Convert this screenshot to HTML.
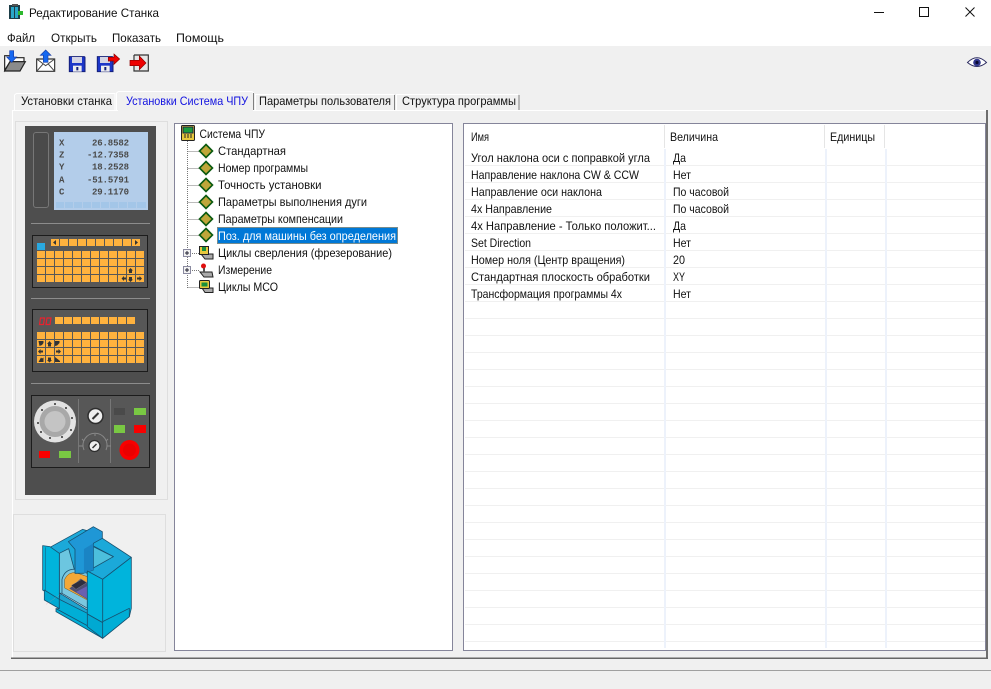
<!DOCTYPE html>
<html lang="ru"><head><meta charset="utf-8"><title>Редактирование Станка</title>
<style>
html,body{margin:0;padding:0;background:#f0f0f0;width:991px;height:689px;overflow:hidden}
svg{display:block}
text{font-family:"Liberation Sans","Noto Sans CJK SC",sans-serif;font-size:12px;fill:#111}
text.n{font:bold 9px "Liberation Mono",monospace;fill:#4a4a4a}
.l{stroke:#777;stroke-width:1;stroke-dasharray:1 1;fill:none}
.m{stroke:#17506f;stroke-width:2.400;stroke-linejoin:round}
.g{stroke:#575757;stroke-width:1;fill:none}
</style></head><body>
<svg xmlns="http://www.w3.org/2000/svg" width="991" height="689" viewBox="0 0 991 689">
<defs>
<g id="d"><path d="M0-6.500 6.500 0 0 6.500-6.500 0Z" fill="#bfa63a" stroke="#0b5a10" stroke-width="1.600"/></g>
</defs>

<rect width="991" height="46" fill="#fff"/>
<rect y="46" width="991" height="643" fill="#f0f0f0"/>

<!-- title bar -->
<rect x="9" y="5" width="11" height="14" fill="#1d3d47"/><rect x="12" y="4" width="6" height="2" fill="#555"/>
<rect x="11" y="7" width="3" height="11" fill="#2aa7c9"/><rect x="15" y="7" width="3" height="11" fill="#2aa7c9"/><rect x="18" y="11" width="5" height="4" fill="#2eb82e"/>
<text x="29" y="17" textLength="130" lengthAdjust="spacingAndGlyphs">Редактирование Станка</text>
<rect x="874" y="12" width="10" height="1" fill="#111"/>
<rect x="919.500" y="7.500" width="9" height="9" fill="none" stroke="#111"/>
<path d="M965.500 7.500 974.500 16.500M974.500 7.500 965.500 16.500" stroke="#111" fill="none"/>

<!-- menu -->
<text x="7" y="42" textLength="28" lengthAdjust="spacingAndGlyphs">Файл</text>
<text x="51" y="42" textLength="46" lengthAdjust="spacingAndGlyphs">Открыть</text>
<text x="112" y="42" textLength="49" lengthAdjust="spacingAndGlyphs">Показать</text>
<text x="176" y="42" textLength="48" lengthAdjust="spacingAndGlyphs">Помощь</text>

<!-- toolbar -->
<g transform="translate(0,45) scale(.3333)">
 <path d="M14 32H34L40 38H72V50H30L14 76Z" fill="#fff" stroke="#222" stroke-width="3.500"/>
 <path d="M14 78 30 50H76L60 78Z" fill="#8b8b8b" stroke="#222" stroke-width="3.500"/>
 <path d="M29 17H41V36H50L35 52 20 36H29Z" fill="#1668f0" stroke="#1a3fa8" stroke-width="2"/>
 <path d="M110 42H164V79H110Z" fill="#fff" stroke="#333" stroke-width="3.500"/>
 <path d="M110 42 137 62 164 42M110 79 130 56M164 79 144 56" fill="none" stroke="#444" stroke-width="3"/>
 <path d="M130 52V31H121L137 15 153 31H144V52Z" fill="#1668f0" stroke="#1a3fa8" stroke-width="2"/>
 <path d="M208 35H252Q255 35 255 38V80H208Z" fill="#1c36c8" stroke="#141f78" stroke-width="3"/>
 <rect x="216" y="36" width="30" height="18" fill="#d4d4e4"/><rect x="219" y="62" width="26" height="18" fill="#eee"/><rect x="229" y="66" width="6" height="10" fill="#141f78"/>
 <path d="M292 35H336Q339 35 339 38V80H292Z" fill="#1c36c8" stroke="#141f78" stroke-width="3"/>
 <rect x="300" y="36" width="30" height="18" fill="#d4d4e4"/><rect x="303" y="62" width="26" height="18" fill="#eee"/><rect x="313" y="66" width="6" height="10" fill="#141f78"/>
 <path d="M325 37H342V27L359 42 342 58V48H325Z" fill="#ee0000" stroke="#8a0000" stroke-width="2"/>
 <path d="M402 30H445V78H402V62M402 46V30" fill="#e6e6e6" stroke="#333" stroke-width="3.500"/>
 <path d="M390 46H418V33L438 54 418 74V62H390Z" fill="#ee0000" stroke="#8a0000" stroke-width="2"/>
</g>
<!-- eye -->
<g transform="translate(977,62.500)">
 <path d="M-9.500 0Q0-9.500 9.500 0Q0 8-9.500 0Z" fill="#fff" stroke="#2c2c60" stroke-width="1"/>
 <circle r="3.800" fill="#33398f"/><circle r="1.600" fill="#0a0a30"/>
</g>

<!-- tab page frame -->
<path d="M12.500 658V110.500H986" fill="none" stroke="#fff"/>
<rect x="986" y="110" width="2" height="549" fill="#6e6e6e"/>
<rect x="11" y="657.500" width="977" height="1.500" fill="#666"/>
<rect y="670" width="991" height="1" fill="#a0a0a0"/>

<!-- tabs -->
<path d="M14.500 110V95L16.500 93.500H115V110" fill="#f0f0f0" stroke="#fff"/>
<path d="M116.500 110V93L118.500 91.500H252L253.500 93V110" fill="#f0f0f0" stroke="#fff"/>
<rect x="253" y="93" width="1" height="17" fill="#808080"/>
<rect x="118" y="110" width="135" height="1" fill="#f0f0f0"/>
<path d="M255.500 110V94.500H394" fill="none" stroke="#fff"/><rect x="394" y="95" width="1" height="15" fill="#808080"/>
<path d="M396.500 110V94.500H518" fill="none" stroke="#fff"/><rect x="518.500" y="95" width="1" height="15" fill="#808080"/>
<text x="21" y="105" textLength="91" lengthAdjust="spacingAndGlyphs">Установки станка</text>
<text x="126" y="105" textLength="122" lengthAdjust="spacingAndGlyphs" style="fill:#1212e0">Установки Система ЧПУ</text>
<text x="259" y="105" textLength="132" lengthAdjust="spacingAndGlyphs">Параметры пользователя</text>
<text x="402" y="105" textLength="114" lengthAdjust="spacingAndGlyphs">Структура программы</text>

<!-- left control panel -->
<rect x="15.500" y="121.500" width="152" height="378" fill="#f0f0f0" stroke="#dedede"/>
<rect x="25" y="126" width="131" height="369" fill="#4e4e4e"/>
<rect x="33.500" y="132.500" width="15" height="75" rx="2.500" fill="#4a4a4a" stroke="#777"/>
<rect x="54" y="132" width="94" height="78" fill="#b3cdea"/>
<rect x="56" y="202" width="90" height="6" fill="#a3c6e8"/>
<path d="M64.500 202v6M73.500 202v6M82.500 202v6M91.500 202v6M100.500 202v6M109.500 202v6M118.500 202v6M127.500 202v6M136.500 202v6" stroke="#b3cdea" fill="none"/>
<text class="n" x="59" y="145.500">X</text>
<text class="n" x="59" y="157.500">Z</text>
<text class="n" x="59" y="169.500">Y</text>
<text class="n" x="59" y="182.500">A</text>
<text class="n" x="59" y="194.500">C</text>
<text class="n" x="92" y="145.500" textLength="37">26.8582</text>
<text class="n" x="87" y="157.500" textLength="42">-12.7358</text>
<text class="n" x="92" y="169.500" textLength="37">18.2528</text>
<text class="n" x="87" y="182.500" textLength="42">-51.5791</text>
<text class="n" x="92" y="194.500" textLength="37">29.1170</text>

<rect x="31" y="223" width="119" height="1" fill="#8c8c8c"/>
<rect x="32.500" y="235.500" width="115" height="52" fill="#575757" stroke="#1c1c1c"/>
<rect x="51" y="239" width="89" height="7" fill="#ffb23e"/>
<path class="g" d="M59.500 239v7M68.500 239v7M77.500 239v7M86.500 239v7M95.500 239v7M104.500 239v7M113.500 239v7M122.500 239v7M131.500 239v7"/>
<rect x="37" y="243" width="8" height="7" fill="#29a9e1"/>
<rect x="37" y="251" width="107" height="31" fill="#ffb23e"/>
<path class="g" d="M45.500 251v31M54.500 251v31M63.500 251v31M72.500 251v31M81.500 251v31M90.500 251v31M99.500 251v31M108.500 251v31M117.500 251v31M126.500 251v31M135.500 251v31M37 258.500h107M37 266.500h107M37 274.500h107"/>
<g fill="#333">
 <path d="M53 242.500 56 240V245ZM135 240 138 242.500 135 245Z"/>
 <path d="M130.500 268 133 270.500H132V273H129V270.500H128ZM130.500 282 128 279.500H129V277H132V279.500H133ZM121.500 278.500 124 276V277.500H126V279.500H124V281ZM142 278.500 139.500 276V277.500H137V279.500H139.500V281Z"/>
</g>
<rect x="31" y="298" width="119" height="1" fill="#8c8c8c"/>
<rect x="32.500" y="309.500" width="115" height="62" fill="#575757" stroke="#1c1c1c"/>
<path d="M40.500 318H44.500L43.500 324.500H39.500ZM47 318H51L50 324.500H46Z" fill="none" stroke="#e8222e" stroke-width="1.200"/>
<rect x="55" y="317" width="80" height="7" fill="#ffb23e"/>
<path class="g" d="M63.500 317v7M72.500 317v7M81.500 317v7M90.500 317v7M99.500 317v7M108.500 317v7M117.500 317v7M126.500 317v7"/>
<rect x="37" y="332" width="107" height="31" fill="#ffb23e"/>
<path class="g" d="M45.500 332v31M54.500 332v31M63.500 332v31M72.500 332v31M81.500 332v31M90.500 332v31M99.500 332v31M108.500 332v31M117.500 332v31M126.500 332v31M135.500 332v31M37 339.500h107M37 347.500h107M37 355.500h107"/>
<g fill="#333">
 <path d="M38.500 341H43.500V343L42 345 39.500 346ZM49.500 341 52 344H51V346.500H48V344H47ZM59.500 341H55V346L57 345.500 59.500 343Z"/>
 <path d="M38 351.500 40.500 349V350.500H43V352.500H40.500V354ZM61 351.500 58.500 349V350.500H56V352.500H58.500V354Z"/>
 <path d="M38.500 362H43.500L43.500 357.500 42 358.500 41 357.500ZM49.500 362.500 47 360H48V357.500H51V360H52ZM60 362H55V357L60 361Z"/>
</g>
<rect x="31" y="383" width="119" height="1" fill="#8c8c8c"/>
<rect x="31.500" y="395.500" width="118" height="72" fill="#575757" stroke="#1c1c1c"/>
<rect x="78" y="399" width="1" height="64" fill="#777"/><rect x="110" y="399" width="1" height="64" fill="#777"/>
<circle cx="55" cy="421.500" r="21" fill="#e2e2e2"/><circle cx="55" cy="421.500" r="15.500" fill="#a8a8a8"/><circle cx="55" cy="421.500" r="10.500" fill="#c4c4c4"/>
<g fill="#333"><circle cx="55" cy="404" r="1"/><circle cx="66" cy="408" r="1"/><circle cx="72" cy="418" r="1"/><circle cx="71" cy="430" r="1"/><circle cx="62" cy="437" r="1"/><circle cx="50" cy="438" r="1"/><circle cx="41" cy="432" r="1"/><circle cx="38" cy="423" r="1"/><circle cx="42" cy="410" r="1"/></g>
<circle cx="95.500" cy="416" r="7.500" fill="#eee" stroke="#2e2e2e" stroke-width="1.500"/><path d="M92.500 419 98.500 413" stroke="#333" stroke-width="2"/>
<path d="M84 450A12 12 0 1 1 106 450" fill="none" stroke="#888"/>
<path d="M95 436V434M84 441 82 439M106 441 108 439M79 446H83M107 446H111" stroke="#888"/>
<circle cx="94.500" cy="446" r="5.500" fill="#eee" stroke="#2e2e2e" stroke-width="1.200"/><path d="M92.500 448 96.500 444" stroke="#333" stroke-width="1.500"/>
<rect x="114" y="408" width="11" height="7" fill="#4a4a4a"/>
<rect x="134" y="408" width="12" height="7" fill="#79c843"/>
<rect x="114" y="425" width="11" height="8" fill="#79c843"/>
<rect x="134" y="425" width="12" height="8" fill="#f80000"/>
<circle cx="129.500" cy="450" r="10" fill="#f80000"/><circle cx="129.500" cy="450" r="6.500" fill="#ea0000"/>
<rect x="39" y="451" width="11" height="7" fill="#f80000"/>
<rect x="59" y="451" width="12" height="7" fill="#79c843"/>

<!-- machine frame -->
<rect x="13.500" y="514.500" width="152" height="137" fill="#f0f0f0" stroke="#dedede"/>
<g transform="translate(10,510) scale(.3333)">
 <!-- back frame -->
 <path class="m" d="M120 112 218 58 260 70V120L232 190H165L150 135Z" fill="#1ba9d9"/>
 <!-- left interior wall -->
 <path class="m" d="M148 130 176 116 196 190H170L156 250H148Z" fill="#6cc6e0"/>
 <!-- top right band and window -->
 <path class="m" d="M250 85 277 85 364 142 278 208 232 183 232 170 310 140 250 108Z" fill="#1ba9d9"/>
 <path class="m" d="M250 110 310 140 250 174Z" fill="#4cbfdc"/>
 <!-- right side -->
 <path class="m" d="M278 208 364 142V295L358 320 278 385Z" fill="#00b4dc"/>
 <!-- arch -->
 <path class="m" d="M156 250V208Q165 175 198 178L232 190V295Z" fill="#7cc7df"/>
 <path d="M164 234V208Q174 186 198 188L232 200V270Z" fill="#f2a838" stroke="#7a5010" stroke-width="1.500"/>
 <path d="M178 236 212 206 232 218V268Z" fill="#4f4f72"/>
 <path d="M198 246 232 228V266Z" fill="#6a5fb0"/>
 <path d="M184 226 215 208 230 218 198 238Z" fill="#2e2e3e" stroke="#999" stroke-width="1"/>
 <!-- ram -->
 <path class="m" d="M175 95 250 50 277 65V85L250 100V180L220 190 195 190V118Z" fill="#1f97d6"/>
 <path d="M222 117 250 100V180L222 190Z" fill="#1a84c4"/>
 <!-- left door -->
 <path class="m" d="M98 107 120 110 148 130V295L145 270 98 240Z" fill="#00b4dc"/>
 <path d="M106 112V242" stroke="#17506f" stroke-width="1.500"/>
 <path class="m" d="M103 240 148 268V296L103 270Z" fill="#00a9d2"/>
 <!-- sill -->
 <path class="m" d="M150 250 232 300V312L148 268Z" fill="#1ea4cf"/>
 <!-- bottom base -->
 <path class="m" d="M138 296 232 350 278 385 358 320V295L278 335 232 310 148 268V296Z" fill="#00aed6"/>
 <path class="m" d="M138 296V305L278 385V372Z" fill="#00aed6"/>
 <!-- right door -->
 <path class="m" d="M232 183 278 208V338L232 312Z" fill="#00b4dc"/>
 <path class="m" d="M232 312 278 338V385L232 350Z" fill="#00a9d2"/>
 <path d="M108 283 155 250" stroke="#e88" stroke-dasharray="3 2" fill="none"/>
</g>

<!-- tree panel -->
<rect x="174.500" y="123.500" width="278" height="527" fill="#fff" stroke="#85859a"/>
<path class="l" d="M187.500 141V288M187.500 151.500H199M187.500 168.500H199M187.500 185.500H199M187.500 202.500H199M187.500 219.500H199M187.500 235.500H199M192 253.500H199M192 270.500H199M187.500 287.500H199"/>
<g transform="translate(181,125)">
 <rect x=".5" y=".5" width="13" height="15" rx="1" fill="#e8c93e" stroke="#222"/>
 <rect x="2" y="2" width="10" height="6" fill="#1c9c3c" stroke="#224"/>
 <path d="M3 10H5M6 10H8M9 10H11M3 12H5M6 12H8M9 12H11" stroke="#222"/>
</g>
<use href="#d" x="206" y="151"/><use href="#d" x="206" y="168"/><use href="#d" x="206" y="185"/><use href="#d" x="206" y="202"/><use href="#d" x="206" y="219"/><use href="#d" x="206" y="235"/>
<rect x="183.500" y="249.500" width="7" height="7" fill="#f2f2f2" stroke="#8a8aa0"/><path d="M185 253H189M187 251V255" stroke="#223"/>
<rect x="183.500" y="266.500" width="7" height="7" fill="#f2f2f2" stroke="#8a8aa0"/><path d="M185 270H189M187 268V272" stroke="#223"/>
<g transform="translate(199,246)">
 <path d="M2 8 14 8V13H6Z" fill="#aaa" stroke="#222"/>
 <rect x=".5" y=".5" width="9" height="8" fill="#e8c93e" stroke="#222"/><rect x="3" y="1" width="4" height="4" fill="#19903a"/>
</g>
<g transform="translate(199,263)">
 <path d="M1 9H13L14 14H5Z" fill="#aaa" stroke="#222"/><rect x="4" y="4" width="2" height="5" fill="#555"/><circle cx="4.500" cy="3" r="2.500" fill="#e01010"/>
</g>
<g transform="translate(199,280)">
 <path d="M3 8H14V12.500H6Z" fill="#aaa" stroke="#222"/>
 <rect x=".5" y=".5" width="10" height="8" rx="1" fill="#e8c93e" stroke="#222"/><rect x="2.500" y="2.500" width="6" height="4" fill="#19903a"/>
</g>
<rect x="217" y="227" width="181" height="17" fill="#0078d7"/>
<rect x="217.500" y="227.500" width="180" height="16" fill="none" stroke="#f0a040" stroke-dasharray="1 1"/>
<text x="199.500" y="138" textLength="65.500" lengthAdjust="spacingAndGlyphs">Система ЧПУ</text>
<text x="218" y="155" textLength="68" lengthAdjust="spacingAndGlyphs">Стандартная</text>
<text x="218" y="172" textLength="90" lengthAdjust="spacingAndGlyphs">Номер программы</text>
<text x="218" y="189" textLength="103.500" lengthAdjust="spacingAndGlyphs">Точность установки</text>
<text x="218" y="206" textLength="149" lengthAdjust="spacingAndGlyphs">Параметры выполнения дуги</text>
<text x="218" y="223" textLength="125" lengthAdjust="spacingAndGlyphs">Параметры компенсации</text>
<text x="218" y="240" textLength="178" lengthAdjust="spacingAndGlyphs" style="fill:#fff">Поз. для машины без определения</text>
<text x="218" y="257" textLength="174" lengthAdjust="spacingAndGlyphs">Циклы сверления (фрезерование)</text>
<text x="218" y="274" textLength="54" lengthAdjust="spacingAndGlyphs">Измерение</text>
<text x="218" y="291" textLength="60" lengthAdjust="spacingAndGlyphs">Циклы МСО</text>

<!-- table panel -->
<rect x="463.500" y="123.500" width="522" height="527" fill="#fff" stroke="#85859a"/>
<path fill="none" stroke="#f0f0f0" d="M465 165.500h520M465 182.500h520M465 199.500h520M465 216.500h520M465 233.500h520M465 250.500h520M465 267.500h520M465 284.500h520M465 301.500h520M465 318.500h520M465 335.500h520M465 352.500h520M465 369.500h520M465 386.500h520M465 403.500h520M465 420.500h520M465 437.500h520M465 454.500h520M465 471.500h520M465 488.500h520M465 505.500h520M465 522.500h520M465 539.500h520M465 556.500h520M465 573.500h520M465 590.500h520M465 607.500h520M465 624.500h520M465 641.500h520"/>
<rect x="664" y="149" width="2" height="499" fill="#edf2fb"/><rect x="825" y="149" width="2" height="499" fill="#edf2fb"/><rect x="885" y="149" width="2" height="499" fill="#edf2fb"/>
<rect x="664" y="125" width="1" height="23" fill="#e5e5e5"/><rect x="824" y="125" width="1" height="23" fill="#e5e5e5"/><rect x="884" y="125" width="1" height="23" fill="#e5e5e5"/>
<text x="471" y="141" textLength="18" lengthAdjust="spacingAndGlyphs">Имя</text>
<text x="670" y="141" textLength="48" lengthAdjust="spacingAndGlyphs">Величина</text>
<text x="830" y="141" textLength="45" lengthAdjust="spacingAndGlyphs">Единицы</text>
<text x="471" y="162" textLength="179" lengthAdjust="spacingAndGlyphs">Угол наклона оси с поправкой угла</text>
<text x="471" y="179" textLength="168" lengthAdjust="spacingAndGlyphs">Направление наклона CW &amp; CCW</text>
<text x="471" y="196" textLength="131" lengthAdjust="spacingAndGlyphs">Направление оси наклона</text>
<text x="471" y="213" textLength="81" lengthAdjust="spacingAndGlyphs">4x Направление</text>
<text x="471" y="230" textLength="185" lengthAdjust="spacingAndGlyphs">4x Направление - Только положит...</text>
<text x="471" y="247" textLength="60" lengthAdjust="spacingAndGlyphs">Set Direction</text>
<text x="471" y="264" textLength="154" lengthAdjust="spacingAndGlyphs">Номер ноля (Центр вращения)</text>
<text x="471" y="281" textLength="179" lengthAdjust="spacingAndGlyphs">Стандартная плоскость обработки</text>
<text x="471" y="298" textLength="151" lengthAdjust="spacingAndGlyphs">Трансформация программы 4x</text>
<text x="673" y="162" textLength="13" lengthAdjust="spacingAndGlyphs">Да</text>
<text x="673" y="179" textLength="18" lengthAdjust="spacingAndGlyphs">Нет</text>
<text x="673" y="196" textLength="56" lengthAdjust="spacingAndGlyphs">По часовой</text>
<text x="673" y="213" textLength="56" lengthAdjust="spacingAndGlyphs">По часовой</text>
<text x="673" y="230" textLength="13" lengthAdjust="spacingAndGlyphs">Да</text>
<text x="673" y="247" textLength="18" lengthAdjust="spacingAndGlyphs">Нет</text>
<text x="673" y="264" textLength="12" lengthAdjust="spacingAndGlyphs">20</text>
<text x="673" y="281" textLength="12" lengthAdjust="spacingAndGlyphs">XY</text>
<text x="673" y="298" textLength="18" lengthAdjust="spacingAndGlyphs">Нет</text>
</svg>
</body></html>
